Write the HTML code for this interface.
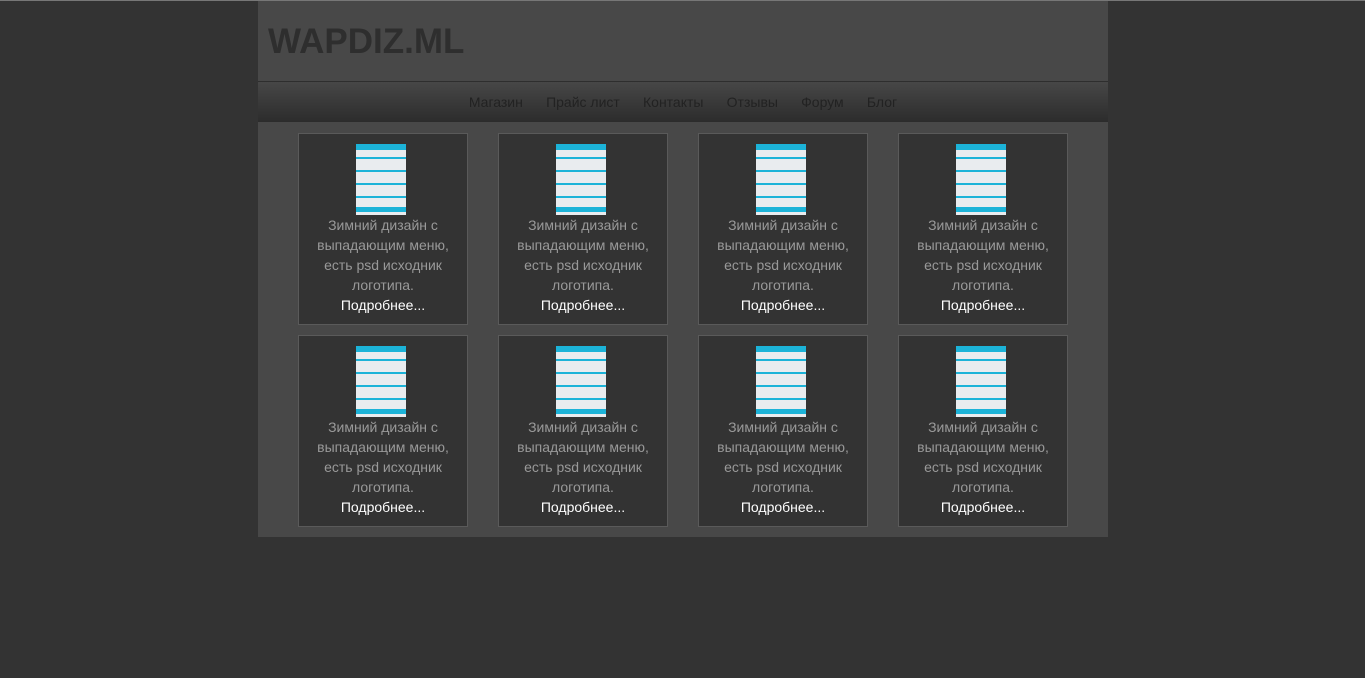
<!DOCTYPE html>
<html><head><meta charset="utf-8"><style>
body{margin:0;background:#333;font-family:"Liberation Sans",sans-serif;}
.top{position:absolute;left:0;top:0;width:1365px;height:1px;background:#777;}
.wrap{position:absolute;left:258px;top:1px;width:850px;}
.head{height:80px;background:#484848;border-bottom:1px solid #2e2e2e;position:relative;}
.logo{position:absolute;left:10px;top:21px;font-size:35px;font-weight:bold;color:#2e2e2e;}
.nav{height:40px;background:linear-gradient(#474747,#2c2c2c);text-align:center;font-size:14px;line-height:40px;color:#222;}
.nav span{margin:0 11.6px;}
.content{background:#484848;height:415px;position:relative;}
.card{position:absolute;width:168px;height:190px;border:1px solid #5a5a5a;background:#333;text-align:center;font-size:14px;line-height:20px;color:#999;}
.card .t{width:50px;height:71px;margin:10px 0 0 57px;background:#e9ecef;position:relative;}
.t i{position:absolute;left:0;width:50px;background:#1cb3d8;}
.card p{margin:0;padding:0 14px;}
.card a{color:#fff;text-decoration:none;display:block;}
</style></head><body>
<div class="top"></div>
<div class="wrap">
<div class="head"><div class="logo">WAPDIZ.ML</div></div>
<div class="nav"><span>Магазин</span><span>Прайс лист</span><span>Контакты</span><span>Отзывы</span><span>Форум</span><span>Блог</span></div>
<div class="content">
<div class="card" style="left:40px;top:11px"><div class="t"><i style="top:0;height:6px"></i><i style="top:13px;height:2px"></i><i style="top:26px;height:2px"></i><i style="top:39px;height:2px"></i><i style="top:52px;height:2px"></i><i style="top:63px;height:5px"></i></div><p>Зимний дизайн с выпадающим меню, есть psd исходник логотипа.</p><a>Подробнее...</a></div>
<div class="card" style="left:240px;top:11px"><div class="t"><i style="top:0;height:6px"></i><i style="top:13px;height:2px"></i><i style="top:26px;height:2px"></i><i style="top:39px;height:2px"></i><i style="top:52px;height:2px"></i><i style="top:63px;height:5px"></i></div><p>Зимний дизайн с выпадающим меню, есть psd исходник логотипа.</p><a>Подробнее...</a></div>
<div class="card" style="left:440px;top:11px"><div class="t"><i style="top:0;height:6px"></i><i style="top:13px;height:2px"></i><i style="top:26px;height:2px"></i><i style="top:39px;height:2px"></i><i style="top:52px;height:2px"></i><i style="top:63px;height:5px"></i></div><p>Зимний дизайн с выпадающим меню, есть psd исходник логотипа.</p><a>Подробнее...</a></div>
<div class="card" style="left:640px;top:11px"><div class="t"><i style="top:0;height:6px"></i><i style="top:13px;height:2px"></i><i style="top:26px;height:2px"></i><i style="top:39px;height:2px"></i><i style="top:52px;height:2px"></i><i style="top:63px;height:5px"></i></div><p>Зимний дизайн с выпадающим меню, есть psd исходник логотипа.</p><a>Подробнее...</a></div>
<div class="card" style="left:40px;top:213px"><div class="t"><i style="top:0;height:6px"></i><i style="top:13px;height:2px"></i><i style="top:26px;height:2px"></i><i style="top:39px;height:2px"></i><i style="top:52px;height:2px"></i><i style="top:63px;height:5px"></i></div><p>Зимний дизайн с выпадающим меню, есть psd исходник логотипа.</p><a>Подробнее...</a></div>
<div class="card" style="left:240px;top:213px"><div class="t"><i style="top:0;height:6px"></i><i style="top:13px;height:2px"></i><i style="top:26px;height:2px"></i><i style="top:39px;height:2px"></i><i style="top:52px;height:2px"></i><i style="top:63px;height:5px"></i></div><p>Зимний дизайн с выпадающим меню, есть psd исходник логотипа.</p><a>Подробнее...</a></div>
<div class="card" style="left:440px;top:213px"><div class="t"><i style="top:0;height:6px"></i><i style="top:13px;height:2px"></i><i style="top:26px;height:2px"></i><i style="top:39px;height:2px"></i><i style="top:52px;height:2px"></i><i style="top:63px;height:5px"></i></div><p>Зимний дизайн с выпадающим меню, есть psd исходник логотипа.</p><a>Подробнее...</a></div>
<div class="card" style="left:640px;top:213px"><div class="t"><i style="top:0;height:6px"></i><i style="top:13px;height:2px"></i><i style="top:26px;height:2px"></i><i style="top:39px;height:2px"></i><i style="top:52px;height:2px"></i><i style="top:63px;height:5px"></i></div><p>Зимний дизайн с выпадающим меню, есть psd исходник логотипа.</p><a>Подробнее...</a></div>
</div>
</div>
</body></html>
